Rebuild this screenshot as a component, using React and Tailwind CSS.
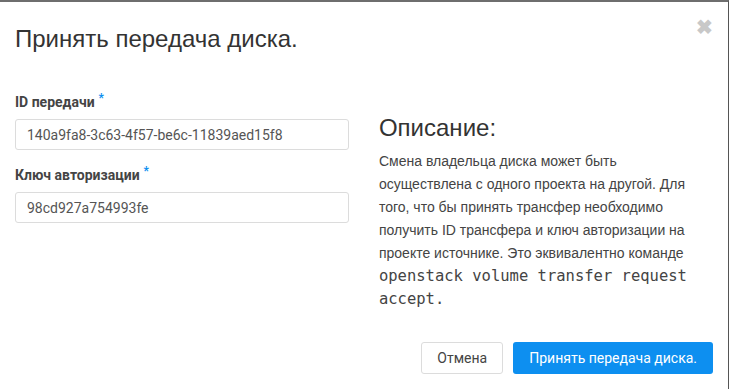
import React from "react";

function Field({ label, value }) {
  return (
    <div className="mb-[15px]">
      <label className="flex items-start text-[14px] font-bold text-[#444] font-['Roboto',sans-serif] leading-[20px] mb-[7px]">
        {label}
        <span className="text-[#0d8ff0] text-[12px] ml-[4px] -mt-[4px]">*</span>
      </label>
      <input
        readOnly
        value={value}
        className="w-[334px] h-[31px] border border-[#dcdcdc] rounded-[3px] px-[11px] text-[14px] text-[#555] font-['Roboto',sans-serif] outline-none"
      />
    </div>
  );
}

export default function App() {
  return (
    <div className="w-[730px] h-[389px] bg-white overflow-hidden">
      <div className="w-[729px] h-[389px] border-t-2 border-r border-t-[#6e6e6e] border-r-[#555] relative flex flex-col">
        <div className="flex items-start justify-between pl-[15px] pr-[15px] pt-[20px] h-[68px]">
          <h4 className="text-[24px] text-[#333] font-['Liberation_Sans',Arial,sans-serif] leading-[34px]">
            Принять передача диска.
          </h4>
          <button className="text-[#c8c8c8] text-[20px] leading-none font-bold -mt-[5px] font-['Liberation_Sans',sans-serif]">✖</button>
        </div>
        <div className="flex px-[15px] pt-[22px] flex-1">
          <div className="w-[365px]">
            <Field label="ID передачи" value="140a9fa8-3c63-4f57-be6c-11839aed15f8" />
            <Field label="Ключ авторизации" value="98cd927a754993fe" />
          </div>
          <div className="pt-[22px] w-[335px]">
            <h3 className="text-[24px] text-[#333] font-['Liberation_Sans',Arial,sans-serif] leading-[28px] mb-[8px]">Описание:</h3>
            <p className="text-[14px] leading-[23px] text-[#444] font-['Liberation_Sans',Arial,sans-serif]">
              Смена владельца диска может быть осуществлена с одного проекта на другой. Для того, что бы принять трансфер необходимо получить ID трансфера и ключ авторизации на проекте источнике. Это эквивалентно команде{" "}
              <code className="font-['DejaVu_Sans_Mono',monospace] text-[15.5px] leading-[20px]">openstack volume transfer request accept.</code>
            </p>
          </div>
        </div>
        <div className="flex justify-end gap-[10px] pr-[15px] pb-[15px]">
          <button className="h-[32px] px-[15px] border border-[#dcdcdc] rounded-[3px] text-[14px] text-[#444] font-['Roboto',sans-serif]">Отмена</button>
          <button className="h-[32px] px-[16px] rounded-[3px] bg-[#0d8ff0] text-[14px] text-white font-['Roboto',sans-serif]">Принять передача диска.</button>
        </div>
      </div>
    </div>
  );
}
